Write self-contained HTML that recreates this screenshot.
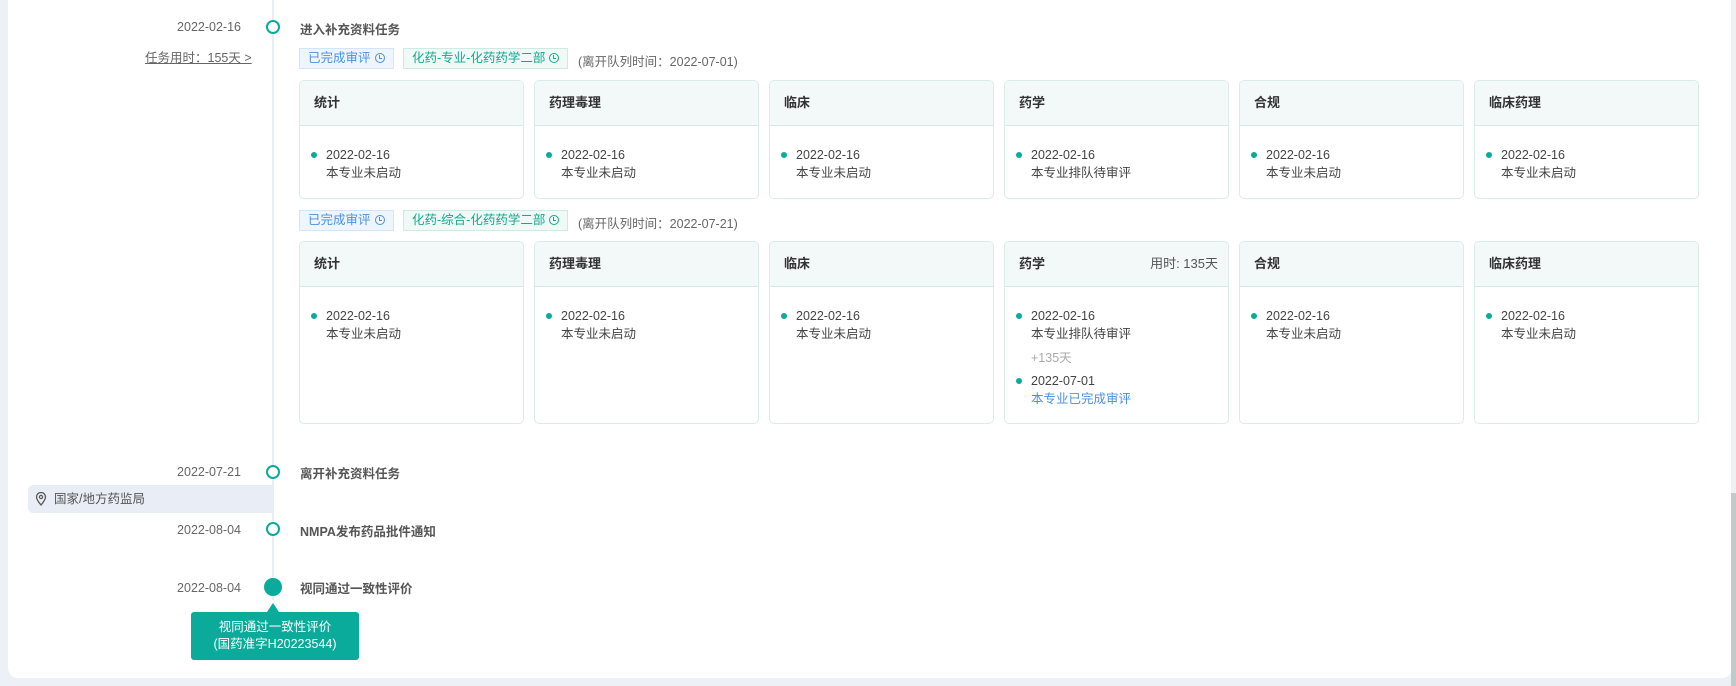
<!DOCTYPE html>
<html><head><meta charset="utf-8"><style>
*{box-sizing:border-box;margin:0;padding:0}
body{width:1736px;height:686px;background:#edf1f7;font-family:"Liberation Sans","Noto Sans CJK SC",sans-serif;font-size:12.5px;color:#555;position:relative;overflow:hidden}
.card{position:absolute;left:8px;top:-10px;width:1724px;height:688px;background:#fff;border-radius:10px}
.sb{position:absolute;left:1731px;top:0;width:5px;height:686px;background:#eef1f4}
.sbt{position:absolute;left:1731px;top:493px;width:5px;height:193px;background:#bfcbc8}
.line{position:absolute;left:272px;top:0;width:2px;height:600px;background:#e8edf3}
.a{position:absolute;white-space:nowrap}
.date{width:120px;text-align:right;left:121px;color:#666}
.title{left:300px;font-weight:bold;color:#555}
.dot{position:absolute;left:266px;width:14px;height:14px;border:2.5px solid #0aab9a;border-radius:50%;background:#fff}
.tag{position:absolute;height:21px;line-height:19px;padding:0 8px;border:1px solid;font-size:12.5px}
.t1{background:#eef5ff;border-color:#d4e4fb;color:#4a90e2}
.t2{background:#effaf7;border-color:#cfeae5;color:#14a88f}
.clk{display:inline-block;width:10px;height:10px;border:1.5px solid currentColor;border-radius:50%;margin-left:4px;vertical-align:-1px;position:relative}
.clk:after{content:"";position:absolute;left:3px;top:1px;width:2px;height:3px;border-left:1.2px solid currentColor;border-bottom:1.2px solid currentColor}
.box{position:absolute;width:225px;border:1px solid #dbece8;border-radius:5px;overflow:hidden;background:#fff}
.hd{height:45px;background:#f3f9f8;border-bottom:1px solid #d5e9e4;padding:0 14px;line-height:44px;font-weight:bold;color:#333;position:relative;font-size:13px}
.hd span{position:absolute;right:10px;font-weight:normal;color:#555}
.it{position:relative;padding-left:26px;margin-top:20px;line-height:18px;color:#444}
.it:before{content:"";position:absolute;left:11px;top:6px;width:6px;height:6px;border-radius:50%;background:#0aab9a}
.bl{color:#4a90e2}
</style></head><body>
<div class="card"></div>
<div class="sb"></div><div class="sbt"></div>
<div class="line"></div>

<div class="a date" style="top:20px">2022-02-16</div>
<div class="dot" style="top:20px"></div>
<div class="a title" style="top:19px">进入补充资料任务</div>
<div class="a" style="left:145px;top:47px;color:#666;text-decoration:underline">任务用时：155天 &gt;</div>

<div class="tag t1" style="left:299px;top:48px">已完成审评<i class="clk"></i></div>
<div class="tag t2" style="left:403px;top:48px">化药-专业-化药药学二部<i class="clk"></i></div>
<div class="a" style="left:578px;top:51px;color:#666">(离开队列时间：2022-07-01)</div>

<div class="box" style="left:299px;top:80px;height:119px"><div class="hd">统计</div><div class="it">2022-02-16<br>本专业未启动</div></div>
<div class="box" style="left:534px;top:80px;height:119px"><div class="hd">药理毒理</div><div class="it">2022-02-16<br>本专业未启动</div></div>
<div class="box" style="left:769px;top:80px;height:119px"><div class="hd">临床</div><div class="it">2022-02-16<br>本专业未启动</div></div>
<div class="box" style="left:1004px;top:80px;height:119px"><div class="hd">药学</div><div class="it">2022-02-16<br>本专业排队待审评</div></div>
<div class="box" style="left:1239px;top:80px;height:119px"><div class="hd">合规</div><div class="it">2022-02-16<br>本专业未启动</div></div>
<div class="box" style="left:1474px;top:80px;height:119px"><div class="hd">临床药理</div><div class="it">2022-02-16<br>本专业未启动</div></div>

<div class="tag t1" style="left:299px;top:210px">已完成审评<i class="clk"></i></div>
<div class="tag t2" style="left:403px;top:210px">化药-综合-化药药学二部<i class="clk"></i></div>
<div class="a" style="left:578px;top:213px;color:#666">(离开队列时间：2022-07-21)</div>

<div class="box" style="left:299px;top:241px;height:183px"><div class="hd">统计</div><div class="it">2022-02-16<br>本专业未启动</div></div>
<div class="box" style="left:534px;top:241px;height:183px"><div class="hd">药理毒理</div><div class="it">2022-02-16<br>本专业未启动</div></div>
<div class="box" style="left:769px;top:241px;height:183px"><div class="hd">临床</div><div class="it">2022-02-16<br>本专业未启动</div></div>
<div class="box" style="left:1004px;top:241px;height:183px"><div class="hd">药学<span>用时: 135天</span></div><div class="it">2022-02-16<br>本专业排队待审评</div><div style="padding-left:26px;margin-top:6px;color:#aaa;line-height:18px">+135天</div><div class="it" style="margin-top:5px">2022-07-01<br><span class="bl">本专业已完成审评</span></div></div>
<div class="box" style="left:1239px;top:241px;height:183px"><div class="hd">合规</div><div class="it">2022-02-16<br>本专业未启动</div></div>
<div class="box" style="left:1474px;top:241px;height:183px"><div class="hd">临床药理</div><div class="it">2022-02-16<br>本专业未启动</div></div>

<div class="a date" style="top:465px">2022-07-21</div>
<div class="dot" style="top:465px"></div>
<div class="a title" style="top:463px">离开补充资料任务</div>
<div class="a" style="left:28px;top:485px;width:245px;height:28px;background:#e9eef6;border-radius:5px 0 0 5px;line-height:28px;padding-left:26px;color:#555">国家/地方药监局</div>
<svg class="a" style="left:35px;top:492px" width="12" height="14" viewBox="0 0 12 14"><path d="M6 13C3 9.5 1.5 7 1.5 5a4.5 4.5 0 0 1 9 0c0 2-1.5 4.5-4.5 8z" fill="none" stroke="#555" stroke-width="1.3"/><circle cx="6" cy="5" r="1.6" fill="none" stroke="#555" stroke-width="1.2"/></svg>

<div class="a date" style="top:523px">2022-08-04</div>
<div class="dot" style="top:522px"></div>
<div class="a title" style="top:521px">NMPA发布药品批件通知</div>

<div class="a date" style="top:581px">2022-08-04</div>
<div class="dot" style="top:578px;left:264px;width:18px;height:18px;background:#0aab9a;border:none"></div>
<div class="a title" style="top:578px">视同通过一致性评价</div>
<div class="a" style="left:267px;top:603px;width:0;height:0;border-left:6px solid transparent;border-right:6px solid transparent;border-bottom:9px solid #0aab9a"></div>
<div class="a" style="left:191px;top:612px;width:168px;height:48px;background:#0aab9a;border-radius:3px;color:#fff;text-align:center;line-height:17px;padding-top:7px;font-size:12.5px">视同通过一致性评价<br>(国药准字H20223544)</div>
</body></html>
